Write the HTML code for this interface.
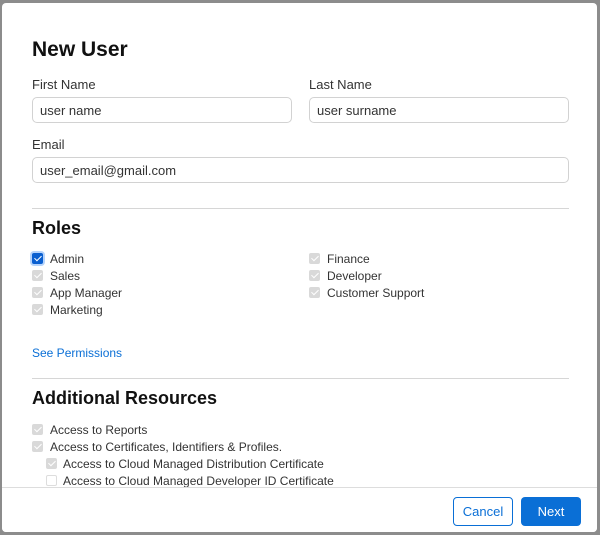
<!DOCTYPE html><html><head><style>
body{margin:0;width:600px;height:535px;background:#8c8c8c;font-family:"Liberation Sans",sans-serif;position:relative;overflow:hidden;color:#1d1d1f}
.m{position:absolute;left:2px;top:3px;width:595px;height:529px;background:#fff;border-radius:4px;overflow:hidden}
.a{position:absolute;white-space:nowrap}
.l{font-size:13px;color:#333}
.in{position:absolute;border:1px solid #d2d2d2;border-radius:5px;box-sizing:border-box;height:26px;font-size:13px;color:#333;padding:5px 7px}
.cb{position:absolute;width:11px;height:11px;background:#d9d9d9;border-radius:2px}
.cb::after{content:"";position:absolute;left:3.5px;top:1px;width:3px;height:6px;border:solid #fff;border-width:0 1.6px 1.6px 0;transform:rotate(45deg)}
.cb.on{background:#0a5fd0;box-shadow:0 0 0 2px #b5d3fb}
.cb.e{background:#fff;border:1px solid #ddd;box-sizing:border-box}.cb.e::after{display:none}
.t{font-size:12px;color:#333}
.hr{position:absolute;left:30px;width:537px;height:1px;background:#d6d6d6}
.h{font-weight:bold;font-size:18px;color:#111}
</style></head><body><div class="m">
<div class="a" style="left:30px;top:35px;font-size:21px;font-weight:bold;color:#111">New User</div>
<div class="a l" style="left:30px;top:74px">First Name</div>
<div class="a l" style="left:307px;top:74px">Last Name</div>
<div class="in" style="left:30px;top:94px;width:260px">user name</div>
<div class="in" style="left:307px;top:94px;width:260px">user surname</div>
<div class="a l" style="left:30px;top:134px">Email</div>
<div class="in" style="left:30px;top:154px;width:537px">user_email@gmail.com</div>
<div class="hr" style="top:205px"></div>
<div class="a h" style="left:30px;top:215px">Roles</div>
<div class="cb on" style="left:30px;top:250px"></div><div class="a t" style="left:48px;top:249px">Admin</div>
<div class="cb" style="left:30px;top:267px"></div><div class="a t" style="left:48px;top:266px">Sales</div>
<div class="cb" style="left:30px;top:284px"></div><div class="a t" style="left:48px;top:283px">App Manager</div>
<div class="cb" style="left:30px;top:301px"></div><div class="a t" style="left:48px;top:300px">Marketing</div>
<div class="cb" style="left:307px;top:250px"></div><div class="a t" style="left:325px;top:249px">Finance</div>
<div class="cb" style="left:307px;top:267px"></div><div class="a t" style="left:325px;top:266px">Developer</div>
<div class="cb" style="left:307px;top:284px"></div><div class="a t" style="left:325px;top:283px">Customer Support</div>
<div class="a t" style="left:30px;top:343px;color:#0a6fd6">See Permissions</div>
<div class="hr" style="top:375px"></div>
<div class="a h" style="left:30px;top:385px">Additional Resources</div>
<div class="cb" style="left:30px;top:421px"></div><div class="a t" style="left:48px;top:420px">Access to Reports</div>
<div class="cb" style="left:30px;top:438px"></div><div class="a t" style="left:48px;top:437px">Access to Certificates, Identifiers &amp; Profiles.</div>
<div class="cb" style="left:44px;top:455px"></div><div class="a t" style="left:61px;top:454px">Access to Cloud Managed Distribution Certificate</div>
<div class="cb e" style="left:44px;top:472px"></div><div class="a t" style="left:61px;top:471px">Access to Cloud Managed Developer ID Certificate</div>
<div style="position:absolute;left:0;top:484px;width:595px;height:45px;background:#fff;border-top:1px solid #ddd"></div>
<div class="a" style="left:451px;top:494px;width:58px;height:27px;border:1px solid #0a6fd6;border-radius:4px;color:#0a6fd6;font-size:13px;text-align:center;line-height:27px">Cancel</div>
<div class="a" style="left:519px;top:494px;width:60px;height:29px;background:#0a6fd6;border-radius:4px;color:#fff;font-size:13px;text-align:center;line-height:29px">Next</div>
</div></body></html>
